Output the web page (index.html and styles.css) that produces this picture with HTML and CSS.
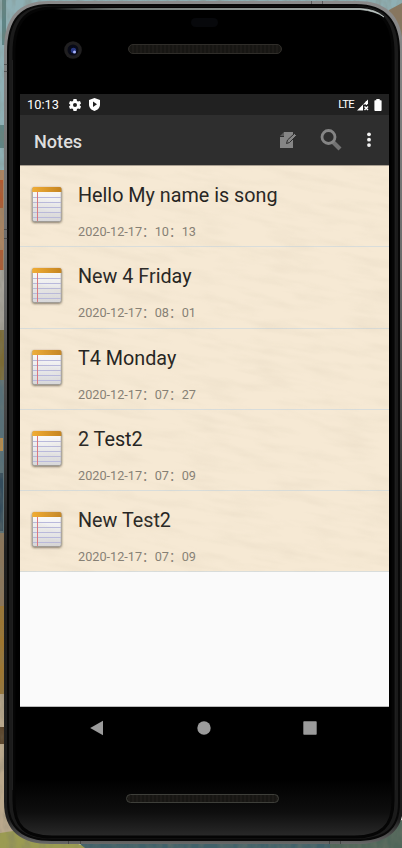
FILE: index.html
```html
<!DOCTYPE html>
<html lang="en">
<head>
<meta charset="utf-8">
<title>Notes</title>
<link rel="stylesheet" href="styles.css">
</head>
<body>
<svg class="device" width="402" height="848" viewBox="0 0 402 848" aria-hidden="true">
  <defs>
    <linearGradient id="rim" x1="0" y1="0" x2="0" y2="1">
      <stop offset="0" stop-color="#8b8b8b"/><stop offset=".3" stop-color="#6c6c6c"/><stop offset=".5" stop-color="#454545"/><stop offset=".65" stop-color="#202020"/><stop offset=".97" stop-color="#1c1c1c"/><stop offset="1" stop-color="#686868"/>
    </linearGradient>
    <linearGradient id="glass" x1="0" y1="0" x2="0" y2="1">
      <stop offset="0" stop-color="#000"/><stop offset=".93" stop-color="#000"/><stop offset=".97" stop-color="#0e0e0e"/><stop offset="1" stop-color="#2a2a2a"/>
    </linearGradient>
    <linearGradient id="shine" x1="0" y1="0" x2="1" y2="0">
      <stop offset="0" stop-color="#99a3a0" stop-opacity="0"/><stop offset=".2" stop-color="#87908d"/><stop offset="1" stop-color="#c4cdca"/>
    </linearGradient>
    <pattern id="mesh" width="4" height="4" patternUnits="userSpaceOnUse"><rect width="4" height="4" fill="#171613"/><path d="M1 0v4" stroke="#22201c"/></pattern>
    <filter id="soft"><feGaussianBlur stdDeviation="0.5"/></filter>
    <filter id="scene" x="0" y="0" width="1" height="1"><feTurbulence type="fractalNoise" baseFrequency=".12 .05" numOctaves="3" seed="4"/><feColorMatrix values="0 0 0 0 .2  0 0 0 0 .2  0 0 0 0 .15  1.8 0 0 0 -.7"/></filter>
  </defs>
  <g>
    <path fill="#8fb0b5" d="M0 0h402v170H0z"/>
    <path fill="#5f8585" d="M2 0h4v45H2zM0 125h9v23H0z"/>
    <path fill="#88765f" d="M389 10l13-7v45h-13z"/>
    <path fill="#a98462" d="M0 170h9v100H0z"/>
    <path fill="#b3582d" d="M0 180h3v28H0zM0 250h3v22H0z"/>
    <path fill="#a9a59c" d="M0 270h9v60H0z"/>
    <path fill="#7b6a34" d="M0 330h9v50H0z"/>
    <path fill="#587078" d="M0 380h9v155H0z"/>
    <path fill="#b98d4d" d="M0 438h3v13H0z"/>
    <path fill="#344c5c" d="M0 473h3v58H0z"/>
    <path fill="#8b765b" d="M0 533h9v80H0z"/>
    <path fill="#9e7630" d="M0 606h9v88H0z"/>
    <path fill="#bba98d" d="M0 694h40v144H0z"/>
    <path fill="#594228" d="M0 727h9v17H0z"/>
    <path fill="#9b9b52" d="M0 833l20-3 75 18H0z"/>
    <path fill="#41616a" d="M75 840h327v8H85z"/>
    <path fill="#50665a" d="M330 840l72-20v28h-72z"/>
    <rect width="402" height="848" filter="url(#scene)" opacity=".5"/>
  </g>
  <path fill="url(#rim)" d="M4 50C4 18 18 1 48 1H358C388 1 403 18 403 50V806C403 832 385 844 357 844H50C22 844 4 832 4 802Z"/>
  <path fill="#1b1b1b" stroke="#080808" stroke-width="2" d="M8 52C8 20 21 5 49 5H356C385 5 399 20 399 52V803C399 830 384 840 355 840H52C24 840 8 829 8 802Z"/>
  <path fill="url(#glass)" stroke="#050505" stroke-width="3" d="M14 53C14 23 25 8 52 8H355C382 8 393 23 393 53V801C393 826 381 837 355 837H52C25 837 14 826 14 801Z"/>
  <path d="M12.500 60V790M395.500 60V790" stroke="#1f1f1f"/>
  <path d="M4 64.500h4M4 71.500h4M4 229.500h4M4 238.500h4M311.500 1v3M322.500 1v3M68.500 841v3M80.500 841v3M329.500 841v3M340.500 841v3" stroke="#222" stroke-opacity=".45"/>
  <path d="M55 8.500H360Q376 9 384 17Q376 11 360 9.500H55Z" fill="url(#shine)" stroke="url(#shine)" stroke-width=".7"/>
  <rect x="191" y="18" width="27" height="9" rx="4.500" fill="#07080b"/>
  <circle cx="73" cy="50" r="8.800" fill="#201f20"/><circle cx="73" cy="50" r="5.500" fill="#080a17"/>
  <g filter="url(#soft)"><circle cx="73.500" cy="50.500" r="2.700" fill="#27357f"/><circle cx="74.500" cy="52" r="1.500" fill="#aab6ff"/></g>
  <rect x="128.500" y="44.500" width="153" height="9" rx="4.500" fill="url(#mesh)" stroke="#302e2a"/>
  <rect x="126.500" y="794.500" width="152" height="8" rx="4" fill="url(#mesh)" stroke="#3e3f3a"/>
  <defs>
    <linearGradient id="cap"><stop offset="0" stop-color="#f1ad34"/><stop offset="1" stop-color="#c58420"/></linearGradient>
    <linearGradient id="paper" x2="0" y2="1"><stop offset="0" stop-color="#fff"/><stop offset="1" stop-color="#d7d7d9"/></linearGradient>
    <filter id="shade" x="-20%" y="-20%" width="140%" height="140%"><feDropShadow dx="0" dy=".8" stdDeviation="1" flood-color="#33291d" flood-opacity=".7"/></filter>
    <symbol id="note" viewBox="0 0 34 42">
      <rect x="2.400" y="2.500" width="28.800" height="34" rx="1.800" fill="url(#paper)" stroke="#93908b" stroke-width=".7" filter="url(#shade)"/>
      <path d="M2.200 7V4Q2.200 2 4 2H29.500Q31.500 2 31.500 4V7Z" fill="url(#cap)"/>
      <path d="M3 12.500h28M3 17.500h28M3 22.500h28M3 27.500h28M3 32.500h28" stroke="#b9b9dc"/>
      <path d="M7.500 7v29" stroke="#db777d"/>
    </symbol>
  </defs>
</svg>
<main class="screen">
  <div class="status">
    <span class="clock">10:13</span>
    <svg class="gear" width="12" height="12" viewBox="0 0 24 24"><path fill="#fff" fill-rule="evenodd" d="M9 0h6l1 4 2 1 4-1 2 5-3 3 3 3-2 5-4-1-2 1-1 4H9l-1-4-2-1-4 1-2-5 3-3-3-3 2-5 4 1 2-1ZM12 8a4 4 0 1 0 0 8 4 4 0 0 0 0-8Z"/></svg>
    <svg width="11" height="13" viewBox="0 0 22 26"><path fill="#fff" fill-rule="evenodd" d="M11 0l11 4v9c0 7-5 11-11 13C5 24 0 20 0 13V4ZM8 7v11l8-5.500Z"/></svg>
    <span class="lte">LTE</span>
    <svg class="signal" width="12" height="12" viewBox="0 0 12 12"><path fill="#fff" d="M0 11.500L11 .5V5H9.500V4.500L8 6v5.500Z"/><path fill="#212121" d="M6 5.500h6V12H6Z"/><path d="M9.500 2v4M7.500 7.500l3.500 3.500M11 7.500l-3.500 3.500" stroke="#fff" stroke-width="1.400"/></svg>
    <svg width="8" height="12" viewBox="0 0 8 12"><path fill="#fff" d="M2.300 0h3.400v1.300H7q.6 0 .6.700v9q0 1-.8 1H1.200q-.8 0-.8-1V2q0-.7.700-.7h1.200Z"/></svg>
  </div>
  <header class="bar">
    <h1>Notes</h1>
    <svg class="compose" width="18" height="18" viewBox="0 0 18 18"><path fill="#858585" d="M5 1h9v16H1V6h4Z"/><path fill="#5c5c5c" d="M1 5l4-4v4Z"/><path d="M7.500 12.500l1-3.500 7-6.500 2 2-7 7Z" fill="#858585" stroke="#2d2d2d" stroke-width="1"/></svg>
    <svg class="search" width="22" height="22" viewBox="0 0 22 22"><path d="M13 13l7 7" stroke="#737373" stroke-width="4.200"/><circle cx="8.500" cy="8" r="6.500" fill="none" stroke="#858585" stroke-width="2.800"/></svg>
    <svg width="4" height="16" viewBox="0 0 4 16"><g fill="#f3f3f3"><circle cx="2" cy="2.300" r="1.900"/><circle cx="2" cy="7.700" r="1.900"/><circle cx="2" cy="13.100" r="1.900"/></g></svg>
  </header>
  <section class="content">
    <ul class="notes">
      <li><svg width="34" height="42"><use href="#note"/></svg><div><h2>Hello My name is song</h2><time>2020-12-17：10：13</time></div></li>
      <li><svg width="34" height="42"><use href="#note"/></svg><div><h2>New 4 Friday</h2><time>2020-12-17：08：01</time></div></li>
      <li><svg width="34" height="42"><use href="#note"/></svg><div><h2>T4 Monday</h2><time>2020-12-17：07：27</time></div></li>
      <li><svg width="34" height="42"><use href="#note"/></svg><div><h2>2 Test2</h2><time>2020-12-17：07：09</time></div></li>
      <li><svg width="34" height="42"><use href="#note"/></svg><div><h2>New Test2</h2><time>2020-12-17：07：09</time></div></li>
    </ul>
    <svg class="grain" width="369" height="406" aria-hidden="true"><filter id="wood" x="0" y="0" width="1" height="1"><feTurbulence type="fractalNoise" baseFrequency=".022 .11" numOctaves="3" seed="8"/><feColorMatrix values="0 0 0 0 .55  0 0 0 0 .48  0 0 0 0 .35  .6 0 0 0 -.25"/></filter><rect x="-60" y="-80" width="500" height="570" filter="url(#wood)" opacity=".45" transform="rotate(10 180 200)"/></svg>
  </section>
</main>
<nav class="nav">
  <svg width="14" height="16" viewBox="0 0 14 16"><path fill="#9b9b9b" d="M.2 8L13 .8V15.200Z"/></svg>
  <svg width="14" height="14" viewBox="0 0 14 14"><circle cx="7" cy="7" r="6.700" fill="#9b9b9b"/></svg>
  <svg width="14" height="14" viewBox="0 0 14 14"><rect x=".3" y=".3" width="13.400" height="13.400" rx=".7" fill="#9b9b9b"/></svg>
</nav>
</body>
</html>
```
FILE: styles.css
```css
* { box-sizing: border-box; }
body {
  margin: 0;
  width: 402px;
  height: 848px;
  padding: 94px 13px 0 20px;
  overflow: hidden;
  font-family: Roboto, "Noto Sans CJK SC", sans-serif;
}
svg { display: block; flex: none; }
h1, h2, ul { margin: 0; padding: 0; }
.device { position: absolute; left: 0; top: 0; z-index: -1; }
.screen { height: 613px; background: #fafafa; border-bottom: 1px solid #bbb; }
.status {
  height: 21px;
  display: flex;
  align-items: center;
  padding: 0 7px;
  background: #212121;
  color: #fff;
}
.clock { width: 42px; font-size: 12.8px; }
.gear { margin-right: 8px; }
.lte { margin-left: auto; font-size: 11.3px; letter-spacing: -0.7px; }
.signal { margin: 0 5px 0 3px; }
.bar {
  height: 50px;
  display: flex;
  align-items: center;
  padding: 0 18px 0 14px;
  background: #2e2e2e;
  color: #dedede;
}
h1 { flex: 1; padding-top: 2px; font-size: 18.1px; font-weight: 500; }
.compose { margin-right: 23px; }
.search { margin-right: 25px; }
.content { position: relative; border-top: 1px solid #a99f91; }
.notes { list-style: none; background: #f6e9d4; }
.notes li {
  height: 81.3px;
  display: flex;
  border-bottom: 1px solid #d9dddb;
  padding-left: 10px;
}
.notes li > svg { margin-top: 19px; }
.notes li > div { padding: 16px 0 0 14px; }
h2 { font-size: 19.75px; font-weight: 400; line-height: 28px; color: #242321; }
time { display: block; margin-top: 13px; font-size: 12.7px; line-height: 18px; color: #857f74; }
.grain { position: absolute; left: 0; top: 0; pointer-events: none; }
.nav { display: flex; justify-content: space-between; align-items: center; height: 42px; padding: 0 72px 0 70px; }
```
